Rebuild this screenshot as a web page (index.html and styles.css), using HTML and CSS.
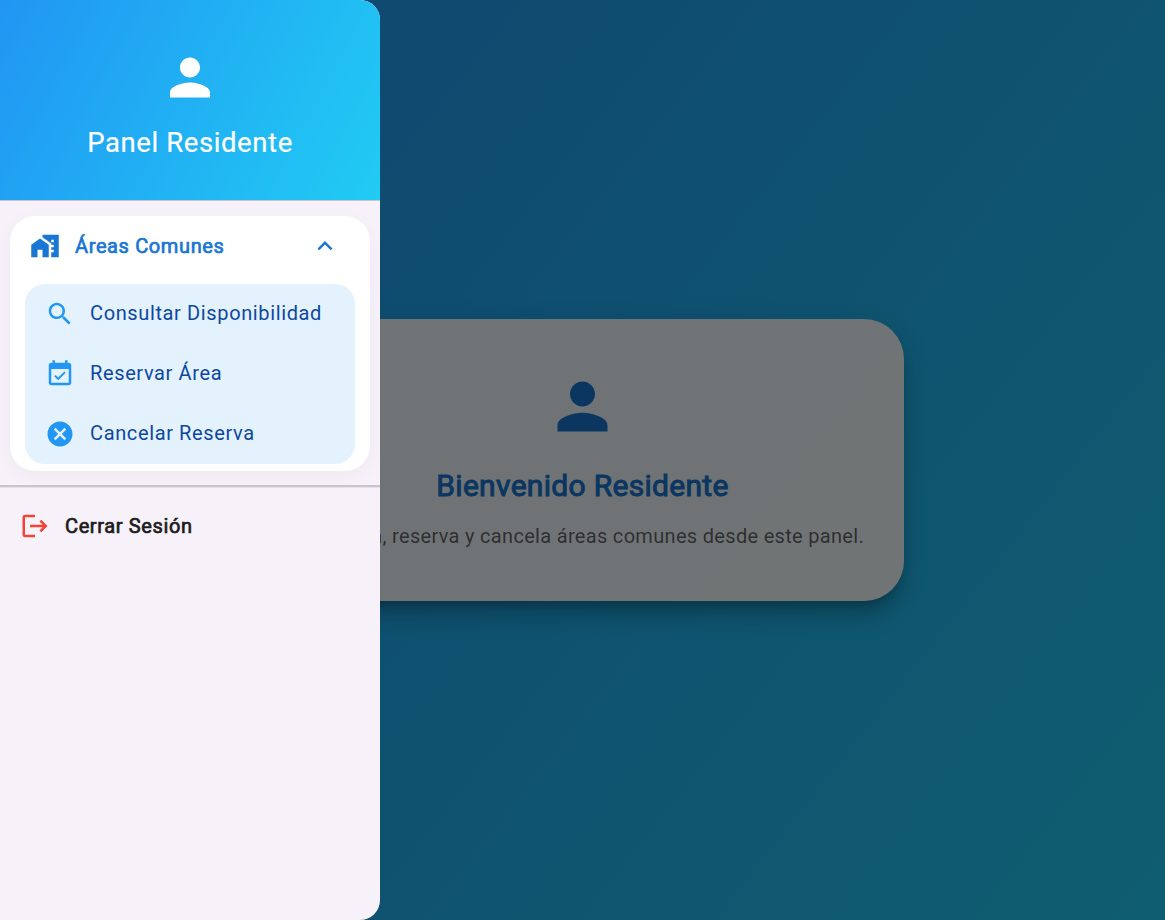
FILE: index.html
```html
<!DOCTYPE html>
<html lang="es">
<head>
<meta charset="utf-8">
<title>Panel Residente</title>
<link rel="stylesheet" href="styles.css">
</head>
<body>
<main class="page">
  <section class="welcome">
    <svg class="welcome-icon" viewBox="0 0 24 24"><path d="M12 12c2.21 0 4-1.79 4-4s-1.79-4-4-4-4 1.79-4 4 1.79 4 4 4zm0 2c-2.67 0-8 1.34-8 4v2h16v-2c0-2.66-5.33-4-8-4z"/></svg>
    <h1 class="welcome-title">Bienvenido Residente</h1>
    <p class="welcome-text">Consulta, reserva y cancela áreas comunes desde este panel.</p>
  </section>
</main>
<div class="scrim"></div>
<aside class="drawer">
  <header class="drawer-header">
    <svg class="avatar" viewBox="0 0 24 24"><path d="M12 12c2.21 0 4-1.79 4-4s-1.79-4-4-4-4 1.79-4 4 1.79 4 4 4zm0 2c-2.67 0-8 1.34-8 4v2h16v-2c0-2.66-5.33-4-8-4z"/></svg>
    <div class="drawer-title">Panel Residente</div>
  </header>
  <nav class="group">
    <div class="group-head">
      <svg class="icon" viewBox="0 0 24 24"><path d="M1 11v10h5v-6h4v6h5V11L8 6z"/><path d="M10 3v1.97l7 5V11h2v2h-2v2h2v2h-2v4h6V3H10zm9 6h-2V7h2v2z"/></svg>
      <span class="group-title"><span class="label">Áreas Comunes</span></span>
      <svg class="chevron" viewBox="0 0 24 24"><path d="M12 8l-6 6 1.41 1.41L12 10.83l4.59 4.58L18 14z"/></svg>
    </div>
    <div class="menu">
      <a class="item"><svg class="icon" viewBox="0 0 24 24"><path d="M15.5 14h-.79l-.28-.27C15.41 12.59 16 11.11 16 9.5 16 5.91 13.09 3 9.5 3S3 5.91 3 9.5 5.91 16 9.5 16c1.61 0 3.09-.59 4.23-1.57l.27.28v.79l5 4.99L20.49 19l-4.99-5zm-6 0C7.01 14 5 11.99 5 9.5S7.01 5 9.5 5 14 7.01 14 9.5 11.99 14 9.5 14z"/></svg><span>Consultar Disponibilidad</span></a>
      <a class="item"><svg class="icon" viewBox="0 0 24 24"><path d="M16.53 11.06L15.47 10l-4.88 4.88-2.12-2.12-1.06 1.06L10.59 17l5.94-5.94zM19 3h-1V1h-2v2H8V1H6v2H5c-1.11 0-1.99.9-1.99 2L3 19c0 1.1.89 2 2 2h14c1.1 0 2-.9 2-2V5c0-1.1-.9-2-2-2zm0 16H5V8h14v11z"/></svg><span>Reservar Área</span></a>
      <a class="item"><svg class="icon" viewBox="0 0 24 24"><path d="M12 2C6.47 2 2 6.47 2 12s4.47 10 10 10 10-4.47 10-10S17.53 2 12 2zm5 13.59L15.59 17 12 13.41 8.41 17 7 15.59 10.59 12 7 8.41 8.41 7 12 10.59 15.59 7 17 8.41 13.41 12 17 15.59z"/></svg><span>Cancelar Reserva</span></a>
    </div>
  </nav>
  <a class="logout"><svg class="icon" viewBox="0 0 24 24"><path d="M4 5h8V3H4c-1.1 0-2 .9-2 2v14c0 1.1.9 2 2 2h8v-2H4V5z"/><path d="M17 7l-1.41 1.41L18.17 11H8v2h10.17l-2.58 2.58L17 17l5-5z"/></svg><span>Cerrar Sesión</span></a>
</aside>
</body>
</html>
```
FILE: styles.css
```css
* { box-sizing: border-box; }
body {
  margin: 0;
  height: 920px;
  position: relative;
  overflow: hidden;
  font-family: Roboto, sans-serif;
  font-weight: 400;
  font-size: 20px;
}
svg { display: block; fill: currentColor; flex: none; }
.page {
  height: 920px;
  display: flex;
  align-items: center;
  justify-content: center;
  background: linear-gradient(128.3deg, #2196f3, #21cbf3);
}
.welcome {
  width: 643px;
  height: 281.5px;
  padding: 50px 0 0;
  display: flex;
  flex-direction: column;
  align-items: center;
  border-radius: 40px;
  background: rgba(255, 255, 255, .95);
  box-shadow: 0 10px 12px -6px rgba(0,0,0,.2), 0 20px 24px -4px rgba(0,0,0,.14), 0 6px 28px 0 rgba(0,0,0,.12);
}
.welcome-icon { width: 75px; height: 75px; color: #1976d2; }
.welcome-title {
  margin: 22px 0 0;
  font-size: 30px;
  line-height: 40px;
  font-weight: 400;
  letter-spacing: .3px;
  color: #1976d2;
  -webkit-text-stroke: 1px #1976d2;
}
.welcome-text { margin: 15px 0 0; line-height: 30px; letter-spacing: .3125px; color: rgba(0,0,0,.6); white-space: nowrap; }
.scrim { position: absolute; inset: 0; background: rgba(0,0,0,.54); }
.drawer {
  position: absolute;
  inset: 0 auto 0 0;
  width: 380px;
  overflow: hidden;
  border-radius: 0 20px 20px 0;
  background: #f7f2fa;
}
.drawer-header {
  height: 201px;
  padding-top: 46.5px;
  display: flex;
  flex-direction: column;
  align-items: center;
  color: #fff;
  border-bottom: 1px solid #cac4d0;
  background: linear-gradient(117.76deg, #2196f3, #21cbf3);
}
.avatar { width: 60px; height: 61px; }
.drawer-title { margin-top: 17px; font-size: 27.5px; line-height: 36px; letter-spacing: .6px; -webkit-text-stroke: .2px #fff; }
.group {
  margin: 15px 10px 14px;
  height: 255px;
  padding: 0 15px;
  border-radius: 25px;
  background: #fff;
  box-shadow: 0 5px 20px rgba(0, 0, 0, .04);
}
.group-head { height: 68px; padding: 0 15px 8px 5px; display: flex; align-items: center; color: #1976d2; }
.group-head .icon { width: 30px; height: 30px; }
.group-title { flex: 1; margin-left: 15px; letter-spacing: .625px; -webkit-text-stroke: .7px #1976d2; }
.chevron { width: 30px; height: 30px; }
.menu { height: 180px; border-radius: 20px; background: #e3f2fd; }
.item { height: 60px; padding: 0 20px; display: flex; align-items: center; gap: 15px; color: #0d47a1; letter-spacing: .625px; white-space: nowrap; }
.item .icon { width: 30px; height: 30px; color: #2196f3; }
.item span { margin-top: -2px; }
.logout {
  height: 80px;
  padding-left: 20px;
  display: flex;
  align-items: center;
  gap: 15px;
  color: #1d1b20;
  border-top: 2px solid #cac4d0;
  box-shadow: inset 0 1px #e6e0ea;
  letter-spacing: .625px;
  -webkit-text-stroke: .7px #1d1b20;
}
.logout .icon { width: 30px; height: 30px; color: #f44336; stroke: none; }
```
